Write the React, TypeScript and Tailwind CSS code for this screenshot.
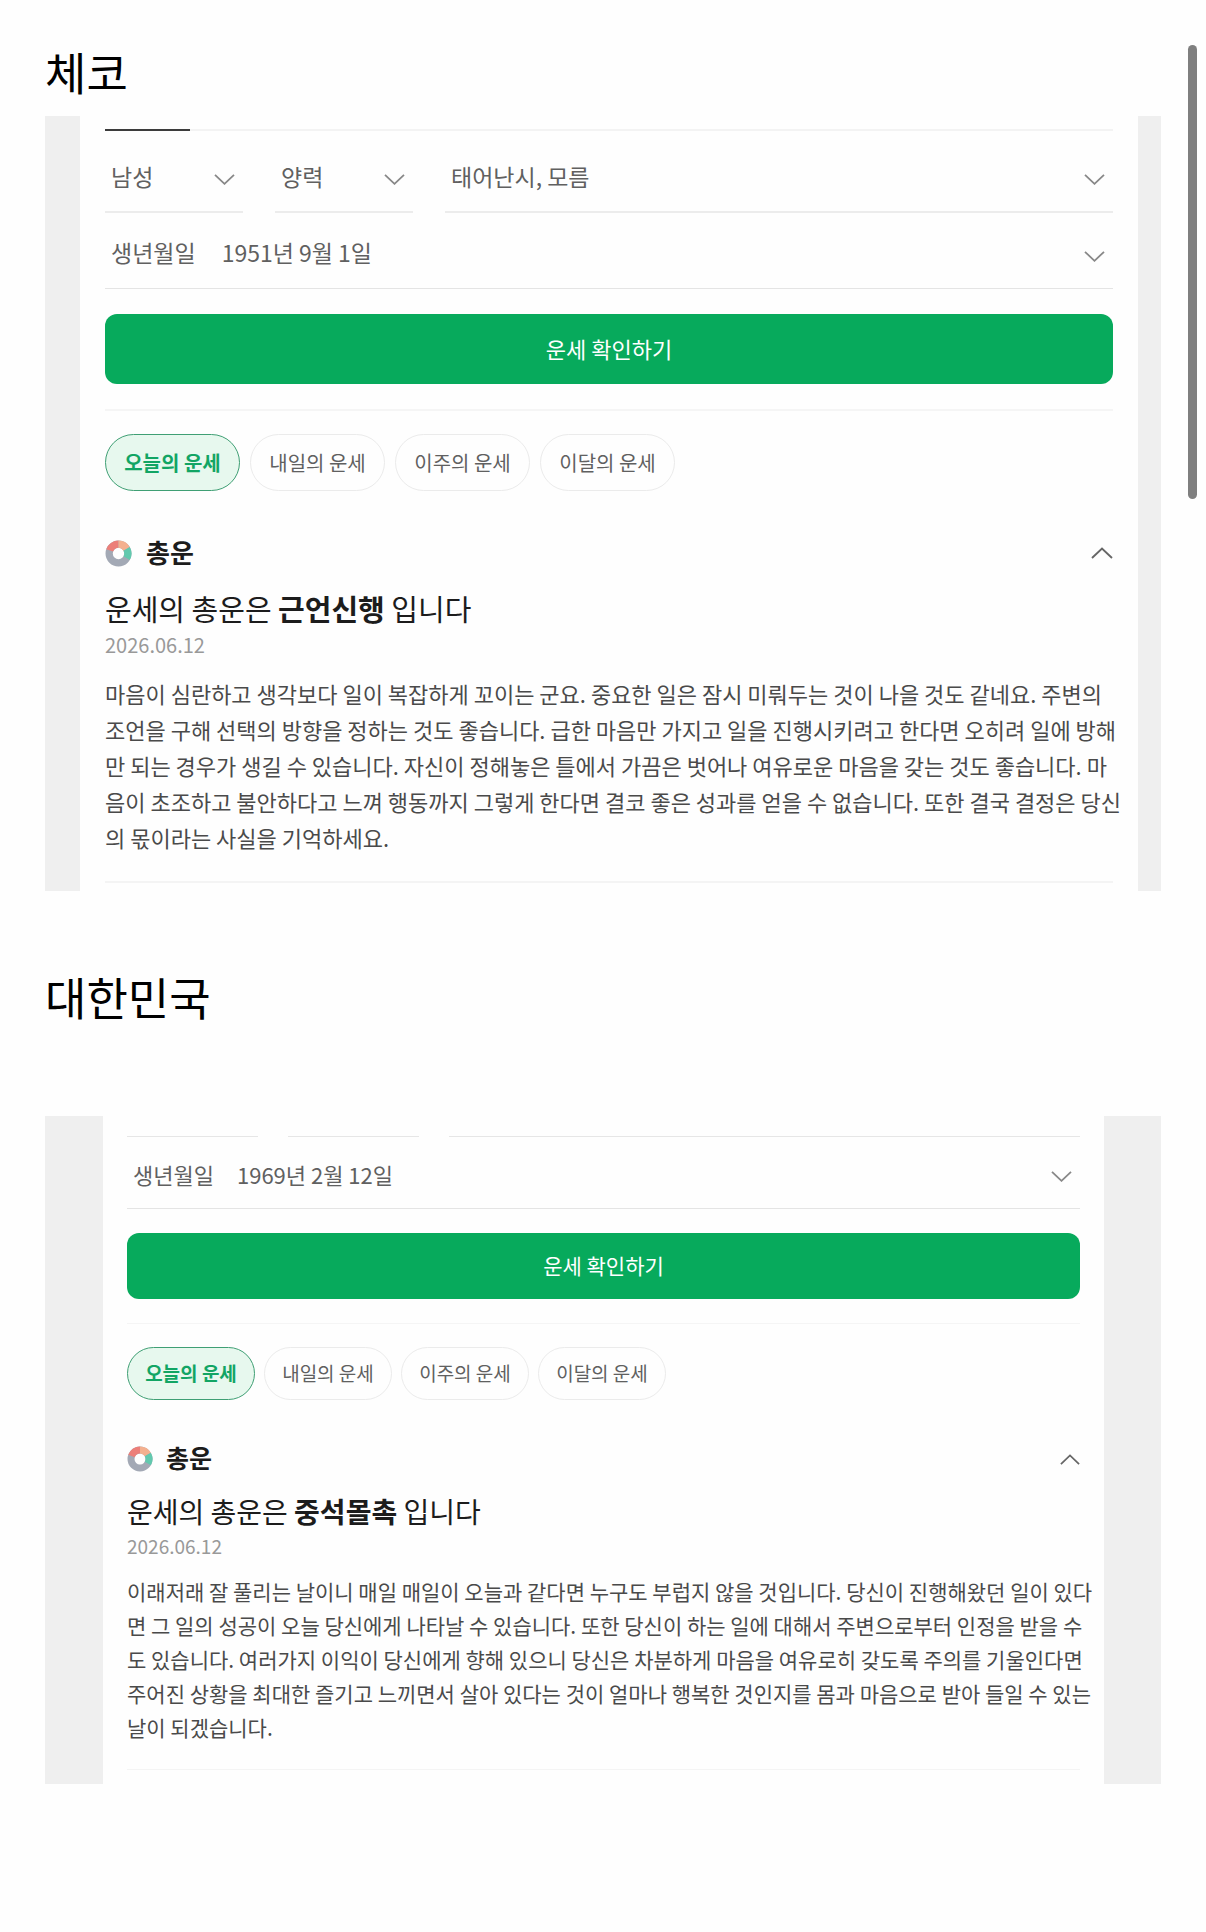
import { useState } from 'react';
import clsx from 'clsx';

type Size = 'lg' | 'md';

interface Fortune {
  id: string;
  country: string;
  size: Size;
  birth: string;
  keyword: string;
  date: string;
  lines: string[];
}

const FORTUNES: Fortune[] = [
  {
    id: 'cz',
    country: '체코',
    size: 'lg',
    birth: '1951년 9월 1일',
    keyword: '근언신행',
    date: '2026.06.12',
    lines: [
      '마음이 심란하고 생각보다 일이 복잡하게 꼬이는 군요. 중요한 일은 잠시 미뤄두는 것이 나을 것도 같네요. 주변의',
      '조언을 구해 선택의 방향을 정하는 것도 좋습니다. 급한 마음만 가지고 일을 진행시키려고 한다면 오히려 일에 방해',
      '만 되는 경우가 생길 수 있습니다. 자신이 정해놓은 틀에서 가끔은 벗어나 여유로운 마음을 갖는 것도 좋습니다. 마',
      '음이 초조하고 불안하다고 느껴 행동까지 그렇게 한다면 결코 좋은 성과를 얻을 수 없습니다. 또한 결국 결정은 당신',
      '의 몫이라는 사실을 기억하세요.',
    ],
  },
  {
    id: 'kr',
    country: '대한민국',
    size: 'md',
    birth: '1969년 2월 12일',
    keyword: '중석몰촉',
    date: '2026.06.12',
    lines: [
      '이래저래 잘 풀리는 날이니 매일 매일이 오늘과 같다면 누구도 부럽지 않을 것입니다. 당신이 진행해왔던 일이 있다',
      '면 그 일의 성공이 오늘 당신에게 나타날 수 있습니다. 또한 당신이 하는 일에 대해서 주변으로부터 인정을 받을 수',
      '도 있습니다. 여러가지 이익이 당신에게 향해 있으니 당신은 차분하게 마음을 여유로히 갖도록 주의를 기울인다면',
      '주어진 상황을 최대한 즐기고 느끼면서 살아 있다는 것이 얼마나 행복한 것인지를 몸과 마음으로 받아 들일 수 있는',
      '날이 되겠습니다.',
    ],
  },
];

const PERIODS = ['오늘의 운세', '내일의 운세', '이주의 운세', '이달의 운세'];

const styles = {
  lg: {
    section: '',
    title: 'mb-[14px]',
    card: 'pl-[35px] pr-[23px]',
    inner: 'px-[25px] pt-[13px] pb-2',
    birth: 'h-[76px] pt-1 text-[23px]',
    birthGap: 'pl-[26px]',
    submit: 'mt-[25px] h-[70px] pb-[2px] text-[22px]',
    divider: 'mt-[25px] h-[2px]',
    chips: 'mt-[23px] gap-[10px]',
    chip: 'h-[57px] w-[135px] text-[20px]',
    header: 'mt-11 h-9 gap-[14px] text-[26px]',
    ring: 'size-[27px]',
    chevronUp: 'h-3 w-[22px]',
    headline: 'mt-[17px] text-[29px] leading-[40px]',
    date: 'mt-[2px] text-[20px] leading-[30px]',
    body: 'mt-[15px] pb-px text-[22px] leading-[36px]',
  },
  md: {
    section: 'mt-[76px]',
    title: 'mb-[89px]',
    card: 'pl-[58px] pr-[57px]',
    inner: 'px-6 pt-5 pb-[14px]',
    birth: 'h-[72px] pt-1 text-[22px]',
    birthGap: 'pl-[23px]',
    submit: 'mt-6 h-[66px] text-[21px]',
    divider: 'mt-6 h-px',
    chips: 'mt-[23px] gap-[9px]',
    chip: 'h-[53px] w-32 text-[19px]',
    header: 'mt-[42px] h-[34px] gap-[13px] text-[25px]',
    ring: 'size-[26px]',
    chevronUp: 'h-[11px] w-5',
    headline: 'mt-4 text-[28px] leading-[38px]',
    date: 'mt-[2px] text-[19px] leading-[28px]',
    body: 'mt-[14px] pb-px text-[21px] leading-[34px]',
  },
};

function ChevronDown() {
  return (
    <svg
      className="pointer-events-none absolute right-2 bottom-[26px] h-[11px] w-[21px]"
      viewBox="0 0 21 11"
      fill="none"
      stroke="#888"
      strokeWidth="1.8"
      aria-hidden="true"
    >
      <path d="M1 .8l9.5 9L20 .8" />
    </svg>
  );
}

function ChevronUp({ className }: { className: string }) {
  return (
    <svg className={className} viewBox="0 0 22 12" fill="none" stroke="#666" strokeWidth="1.9" aria-hidden="true">
      <path d="M1 11L11 1.5 21 11" />
    </svg>
  );
}

function FortuneRing({ className }: { className: string }) {
  return (
    <svg className={className} viewBox="0 0 26 26" fill="none" strokeWidth="7" aria-hidden="true">
      <circle cx="13" cy="13" r="9" stroke="#a3a9b5" />
      <path d="M4.5 10A9 9 0 0 1 13 4" stroke="#ec7f79" />
      <path d="M13 4A9 9 0 0 1 20.8 8.5" stroke="#f4b08f" />
      <path d="M20.8 8.5A9 9 0 0 1 20.8 17.5" stroke="#62c9ae" />
    </svg>
  );
}

function SelectField({ label, value }: { label: string; value: string }) {
  return (
    <div className="relative h-[70px] border-b-2 border-[#ececec]">
      <select
        aria-label={label}
        className="h-full w-full appearance-none bg-transparent pb-[2px] pl-[6px] text-[23px] outline-none"
      >
        <option>{value}</option>
      </select>
      <ChevronDown />
    </div>
  );
}

function ProfileFields({ size }: { size: Size }) {
  if (size === 'md') {
    // scrolled past: only the underlines of the row are still in view
    return (
      <div className="grid grid-cols-[131px_131px_1fr] gap-[30px]">
        <div className="h-px bg-[#e6e6e6]" />
        <div className="h-px bg-[#e6e6e6]" />
        <div className="h-px bg-[#e6e6e6]" />
      </div>
    );
  }

  return (
    <>
      <div className="h-[2px] bg-[#f3f3f3]">
        <div className="h-full w-[85px] bg-[#3c3c3c]" />
      </div>
      <div className="mt-3 grid grid-cols-[138px_138px_1fr] gap-8">
        <SelectField label="성별" value="남성" />
        <SelectField label="양력/음력" value="양력" />
        <SelectField label="태어난 시간" value="태어난시, 모름" />
      </div>
    </>
  );
}

function FortuneCard({ fortune }: { fortune: Fortune }) {
  const [period, setPeriod] = useState(PERIODS[0]);
  const [open, setOpen] = useState(true);
  const s = styles[fortune.size];
  const birthId = `birth-${fortune.id}`;

  return (
    <div className={clsx('bg-[#efefef]', s.card)}>
      <div className={clsx('bg-[#fefefe] text-[#606060]', s.inner)}>
        <ProfileFields size={fortune.size} />

        <div className={clsx('relative flex items-center border-b border-[#e4e4e4]', s.birth)}>
          <label htmlFor={birthId} className="pl-[6px]">
            생년월일
          </label>
          <select id={birthId} className={clsx('h-full flex-1 appearance-none bg-transparent outline-none', s.birthGap)}>
            <option>{fortune.birth}</option>
          </select>
          <ChevronDown />
        </div>

        <button type="button" className={clsx('w-full rounded-xl bg-[#07aa5c] text-white', s.submit)}>
          운세 확인하기
        </button>

        <div className={clsx('bg-[#f5f5f5]', s.divider)} />

        <div className={clsx('flex', s.chips)}>
          {PERIODS.map((p) => (
            <button
              key={p}
              type="button"
              onClick={() => setPeriod(p)}
              className={clsx(
                'rounded-full border whitespace-nowrap',
                s.chip,
                p === period ? 'border-[#3f9f74] bg-[#e7f8ee] font-bold text-[#12a564]' : 'border-[#ebebeb]'
              )}
            >
              {p}
            </button>
          ))}
        </div>

        <div className={clsx('flex items-center font-bold text-[#1c1c1c]', s.header)}>
          <FortuneRing className={s.ring} />
          <h2 className="flex-1 pb-[3px]">총운</h2>
          <button type="button" aria-label="총운" aria-expanded={open} onClick={() => setOpen(!open)}>
            <ChevronUp className={s.chevronUp} />
          </button>
        </div>

        {open && (
          <>
            <p className={clsx('text-[#1c1c1c]', s.headline)}>
              운세의 총운은 <strong>{fortune.keyword}</strong> 입니다
            </p>
            <p className={clsx('text-[#999]', s.date)}>{fortune.date}</p>
            <p className={clsx('whitespace-nowrap text-[#4a4a4a]', s.body)}>
              {fortune.lines.map((line) => (
                <span key={line} className="block">
                  {line}
                </span>
              ))}
            </p>
          </>
        )}

        <div className={clsx('bg-[#f4f4f4]', s.divider)} />
      </div>
    </div>
  );
}

export default function App() {
  return (
    <div className="relative min-h-screen bg-[#fefefe] px-[45px] pt-[42px] pb-20 font-['Noto_Sans_CJK_KR',sans-serif]">
      {FORTUNES.map((fortune) => (
        <section key={fortune.id} className={styles[fortune.size].section}>
          <h1 className={clsx('text-[45px] leading-[60px] text-black', styles[fortune.size].title)}>
            {fortune.country}
          </h1>
          <FortuneCard fortune={fortune} />
        </section>
      ))}

      {/* overlay scrollbar thumb */}
      <div className="absolute top-[45px] right-[9px] h-[454px] w-[9px] rounded-full bg-[#7f7f7f]" />
    </div>
  );
}
